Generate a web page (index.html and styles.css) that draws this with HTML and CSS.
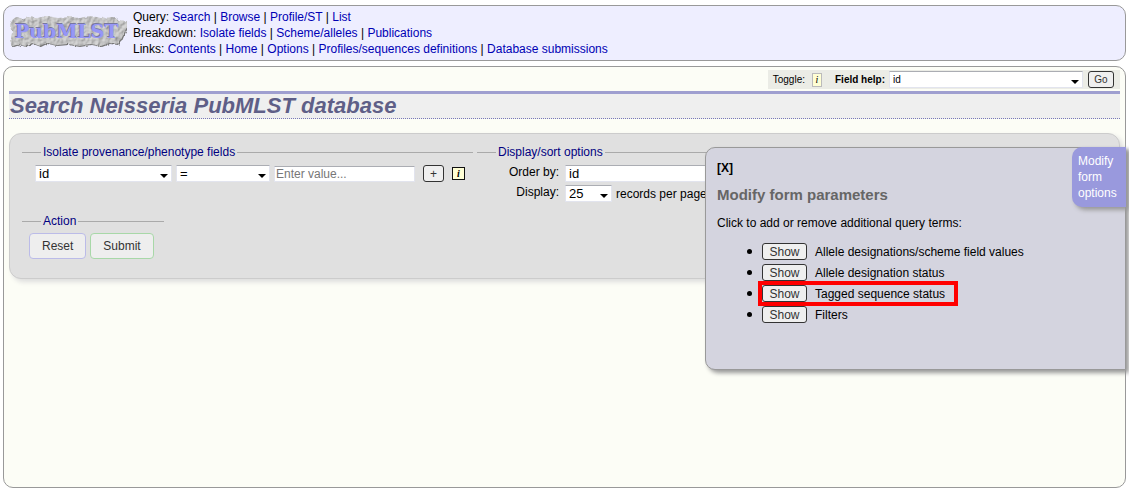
FILE: index.html
```html
<!DOCTYPE html>
<html lang="en">
<head>
<meta charset="utf-8">
<title>Search Neisseria PubMLST database</title>
<link rel="stylesheet" href="styles.css">
</head>
<body>
<header class="banner">
  <svg class="logo" viewBox="0 0 120 34" role="img" aria-label="PubMLST">
    <defs>
      <filter id="stone" x="0" y="0" width="100%" height="100%" color-interpolation-filters="sRGB">
        <feTurbulence type="fractalNoise" baseFrequency="0.25" numOctaves="2" seed="4" result="noise"/>
        <feDisplacementMap in="SourceGraphic" in2="noise" scale="3" xChannelSelector="R" yChannelSelector="G" result="rough"/>
        <feDiffuseLighting in="noise" surfaceScale="1" diffuseConstant="1.1" lighting-color="#c6c6c6" result="light">
          <feDistantLight azimuth="225" elevation="64"/>
        </feDiffuseLighting>
        <feGaussianBlur in="light" stdDeviation="0.5" result="soft"/>
        <feComposite in="soft" in2="rough" operator="in" result="slab"/>
        <feOffset in="rough" dx="1" dy="1" result="edge"/>
        <feMerge><feMergeNode in="edge"/><feMergeNode in="slab"/></feMerge>
      </filter>
    </defs>
    <path filter="url(#stone)" fill="#777" d="M3 5 L7 2 L15 4 L19 2 L28 3 L37 1 L49 3 L61 2 L71 3 L81 1 L92 3 L104 2 L110 5 L118 6 L118 12 L115 18 L112 25 L108 29 L100 28 L92 31 L82 29 L70 31 L59 29 L48 30 L37 28 L31 31 L23 28 L16 32 L10 29 L4 31 L1 26 L3 18 L1 11 Z"/>
    <text class="logo-shade" x="5" y="22">PubMLST</text>
    <text class="logo-text" x="6" y="23">PubMLST</text>
  </svg>
  <nav class="links">
    <div>Query: <a href="#">Search</a> | <a href="#">Browse</a> | <a href="#">Profile/ST</a> | <a href="#">List</a></div>
    <div>Breakdown: <a href="#">Isolate fields</a> | <a href="#">Scheme/alleles</a> | <a href="#">Publications</a></div>
    <div>Links: <a href="#">Contents</a> | <a href="#">Home</a> | <a href="#">Options</a> | <a href="#">Profiles/sequences definitions</a> | <a href="#">Database submissions</a></div>
  </nav>
</header>
<main class="page">
  <div class="toolbar">
    <span>Toggle:</span>
    <button class="info pale" type="button">i</button>
    <label class="help-label" for="help">Field help:</label>
    <span class="pick pick-help"><select id="help"><option>id</option></select></span>
    <button class="small go" type="button">Go</button>
  </div>
  <h1>Search Neisseria PubMLST database</h1>
  <form class="panel">
    <div class="row">
      <fieldset class="fields">
        <legend>Isolate provenance/phenotype fields</legend>
        <div class="controls">
          <span class="pick pick-field"><select aria-label="Field"><option>id</option></select></span>
          <span class="pick pick-operator"><select aria-label="Operator"><option>=</option></select></span>
          <input class="value" type="text" placeholder="Enter value..." aria-label="Value">
          <button class="small add" type="button">+</button>
          <button class="info" type="button">i</button>
        </div>
      </fieldset>
      <fieldset class="sorting">
        <legend>Display/sort options</legend>
        <div class="option-grid">
          <label for="order">Order by:</label>
          <span class="pick pick-order"><select id="order"><option>id</option></select></span>
          <label for="count">Display:</label>
          <div class="records"><span class="pick pick-count"><select id="count"><option>25</option></select></span><span>records per page</span></div>
        </div>
      </fieldset>
    </div>
    <fieldset class="actions">
      <legend>Action</legend>
      <div class="buttons">
        <button class="big reset" type="reset">Reset</button>
        <button class="big submit" type="submit">Submit</button>
      </div>
    </fieldset>
  </form>
</main>
<aside class="popup">
  <button class="tab" type="button">Modify form options</button>
  <button class="close" type="button">[X]</button>
  <h2>Modify form parameters</h2>
  <p>Click to add or remove additional query terms:</p>
  <ul>
    <li><span class="term"><button class="small show" id="s1" type="button">Show</button><label for="s1">Allele designations/scheme field values</label></span></li>
    <li><span class="term"><button class="small show" id="s2" type="button">Show</button><label for="s2">Allele designation status</label></span></li>
    <li><span class="term marked"><button class="small show" id="s3" type="button">Show</button><label for="s3">Tagged sequence status</label></span></li>
    <li><span class="term"><button class="small show" id="s4" type="button">Show</button><label for="s4">Filters</label></span></li>
  </ul>
</aside>
</body>
</html>
```
FILE: styles.css
```css
* { box-sizing: border-box; }
body {
  margin: 0;
  min-height: 100vh;
  padding: 5px 3px;
  display: flex;
  flex-direction: column;
  gap: 5px;
  position: relative;
  overflow: hidden;
  background: #fff;
  color: #000;
  font: 12px/16px "Liberation Sans", Arial, sans-serif;
}
button, input, select { font: inherit; margin: 0; color: #000; }
a { color: #0000b4; text-decoration: none; }

.banner {
  display: flex;
  align-items: flex-start;
  gap: 4px;
  padding: 3px 5px;
  border: 1px solid #999;
  border-radius: 10px;
  background: #eef;
}
.logo { width: 120px; height: 34px; margin-top: 6px; flex: none; }
.logo text { font: bold 19px "DejaVu Serif", serif; }
.logo-shade { fill: #77779f; }
.logo-text { fill: #9696f6; }

.page {
  flex: 1;
  padding: 3px 5px;
  border: 1px solid #999;
  border-radius: 10px;
  background: #fcfdf6;
}
.toolbar {
  display: flex;
  align-items: center;
  width: fit-content;
  height: 19px;
  margin: 0 0 2px auto;
  padding: 0 6px 0 5px;
  background: #ebece6;
  font-size: 10px;
}
.help-label { margin: 0 4px 0 13px; font-weight: bold; }
h1 {
  margin: 0 0 14px;
  padding: 0 1px;
  border-top: 3px solid #9f9fd0;
  border-bottom: 1px dotted #7878b8;
  background: #efefef;
  color: #5f5f87;
  font: italic bold 22px/24px "Liberation Sans", Arial, sans-serif;
}

.pick { position: relative; display: inline-flex; height: 17px; }
.pick select {
  appearance: none;
  width: 100%;
  padding: 0 3px;
  border: 1px solid #e2e4ee;
  border-top-color: #abadb3;
  border-radius: 0;
  background: #fff;
  line-height: 15px;
}
.panel select { font-size: 13px; }
.pick::after {
  content: "";
  position: absolute;
  right: 4px;
  bottom: 4px;
  width: 8px;
  height: 4px;
  background: #000;
  clip-path: polygon(0 0, 100% 0, 50% 100%);
  pointer-events: none;
}
.pick-help { width: 194px; }
.pick-field { width: 137px; }
.pick-operator { width: 94px; }
.pick-order { width: 200px; }
.pick-count { width: 47px; }

.small {
  height: 17px;
  padding: 0;
  border: 1px solid #333;
  border-radius: 3px;
  background: #efefef;
  color: #333;
  line-height: 14px;
}
.go { width: 26px; margin-left: 5px; }
.add { width: 21px; margin-left: 4px; }
.show { width: 45px; }
.info {
  width: 13px;
  height: 13px;
  padding: 0;
  border: 1px solid #111;
  background: #ffffd5;
  font: italic bold 10px/10px "Liberation Serif", serif;
}
.info.pale { width: 10px; height: 14px; margin-left: 7px; border-color: #bbb; font-weight: normal; }

.panel {
  padding: 11px 12px 19px;
  border: 1px solid #ccc;
  border-radius: 12px;
  background: #e0e0e0;
  box-shadow: 3px 3px 5px #ddd;
}
.row { display: flex; gap: 4px; margin-bottom: 12px; }
fieldset { margin: 0; min-width: 0; padding: 0; border: 0; border-top: 1px solid #aaa; }
legend { padding: 0 2px; color: #000080; line-height: 14px; }
.fields { padding: 6px 8px 0 13px; }
.fields legend { margin-left: 6px; }
.controls { display: flex; align-items: center; gap: 4px; }
.value {
  width: 141px;
  height: 16px;
  padding: 0 1px;
  border: 1px solid #e2e4ee;
  border-top-color: #abadb3;
}
.value::placeholder { color: #777; }
.controls .info { margin-left: 4px; }
.sorting { padding: 6px 20px 0 32px; }
.sorting legend { margin-left: -13px; }
.option-grid { display: grid; grid-template-columns: auto auto; gap: 3px 6px; }
.option-grid label { text-align: right; line-height: 14px; }
.records { display: flex; align-items: center; gap: 4px; }
.actions { width: 142px; padding: 5px 7px 0; }
.actions legend { margin-left: 12px; }
.buttons { display: flex; gap: 4px; }
.big {
  height: 26px;
  padding: 0 12px;
  border: 1px solid #bbbbe8;
  border-radius: 4px;
  background: #eee;
  color: #333;
}
.submit { border-color: #a8d8a8; }

.popup {
  position: absolute;
  top: 147px;
  right: 3px;
  width: 421px;
  padding: 12px 11px 42px;
  border: 1px solid #999;
  border-radius: 10px 0 0 10px;
  background: #d4d4df;
  box-shadow: 3px 3px 4px #999;
}
.tab {
  position: absolute;
  top: -1px;
  right: -1px;
  width: 54px;
  padding: 6px;
  border: 0;
  border-radius: 10px 0 0 10px;
  background: #9999dd;
  color: #fff;
  text-align: left;
  box-shadow: 3px 3px 4px #999;
}
.close { display: block; padding: 0; border: 0; background: none; font-weight: bold; }
h2 { margin: 10px 0 11px; color: #666; font-size: 15px; line-height: 18px; }
p { margin: 0 0 12px; }
ul { margin: 0; padding: 0 0 0 45px; list-style: none; }
li { display: flex; align-items: center; height: 17px; margin-bottom: 4px; }
li::before { content: ""; width: 5px; height: 5px; margin: 0 10px 0 -15px; border-radius: 50%; background: #000; }
.term { display: flex; align-items: center; gap: 8px; }
.marked { padding-right: 9px; outline: 4px solid #f00; }
```
